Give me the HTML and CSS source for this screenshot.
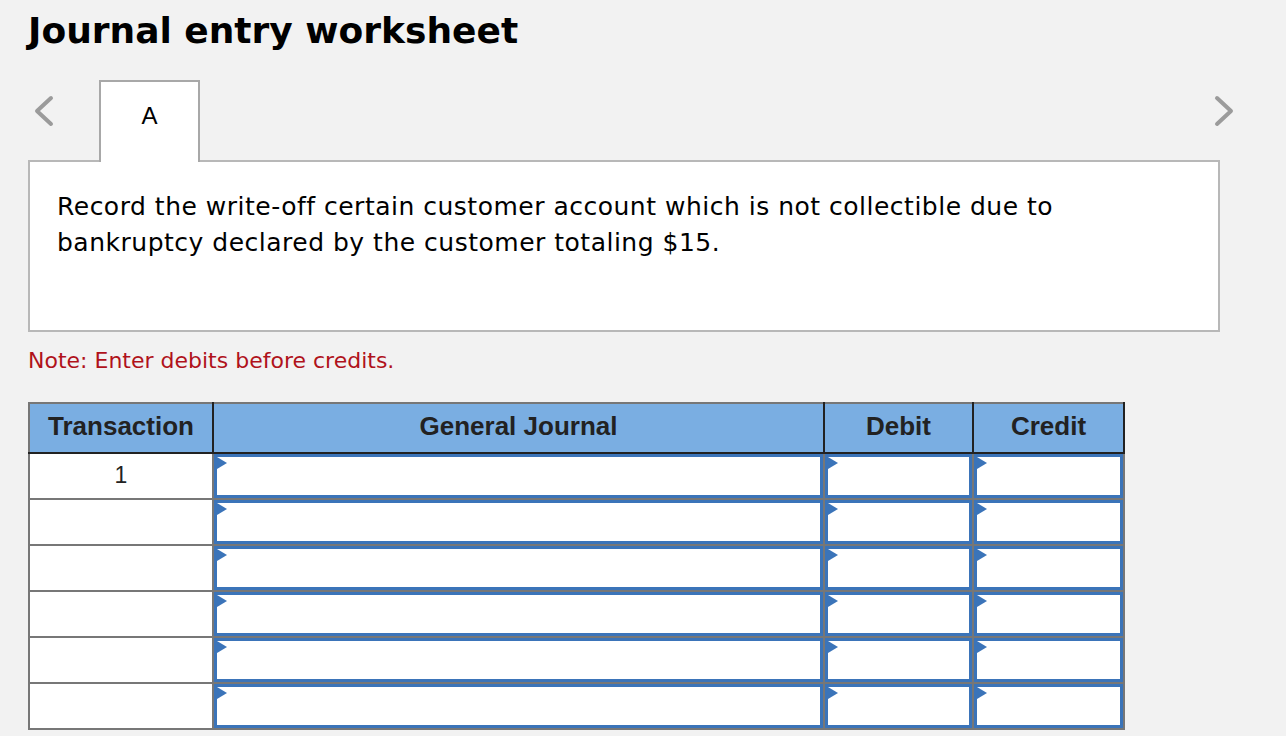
FILE: index.html
```html
<!DOCTYPE html>
<html lang="en">
<head>
<meta charset="utf-8">
<title>Journal entry worksheet</title>
<link rel="stylesheet" href="styles.css">
</head>
<body>
<div class="page">
  <h1 class="title">Journal entry worksheet</h1>

  <div class="nav">
    <button class="chev chev-left" aria-label="Previous">
      <svg width="20" height="32" viewBox="0 0 20 32"><polyline points="17,3 3,16 17,29" fill="none" stroke="#9b9b9b" stroke-width="4" stroke-linecap="round" stroke-linejoin="round"/></svg>
    </button>
    <div class="tab">A</div>
    <div class="spacer"></div>
    <button class="chev chev-right" aria-label="Next">
      <svg width="20" height="32" viewBox="0 0 20 32"><polyline points="3,3 17,16 3,29" fill="none" stroke="#9b9b9b" stroke-width="4" stroke-linecap="round" stroke-linejoin="round"/></svg>
    </button>
  </div>

  <div class="prompt">
    <p>Record the write-off certain customer account which is not collectible due to bankruptcy declared by the customer totaling $15.</p>
  </div>

  <p class="note">Note: Enter debits before credits.</p>

  <table class="journal">
    <colgroup>
      <col class="w-trans">
      <col class="w-gj">
      <col class="w-debit">
      <col class="w-credit">
    </colgroup>
    <thead>
      <tr><th>Transaction</th><th>General Journal</th><th>Debit</th><th>Credit</th></tr>
    </thead>
    <tbody>
      <tr><td class="trans">1</td><td class="cell"><div class="field"></div></td><td class="cell"><div class="field"></div></td><td class="cell"><div class="field"></div></td></tr>
      <tr><td class="trans"></td><td class="cell"><div class="field"></div></td><td class="cell"><div class="field"></div></td><td class="cell"><div class="field"></div></td></tr>
      <tr><td class="trans"></td><td class="cell"><div class="field"></div></td><td class="cell"><div class="field"></div></td><td class="cell"><div class="field"></div></td></tr>
      <tr><td class="trans"></td><td class="cell"><div class="field"></div></td><td class="cell"><div class="field"></div></td><td class="cell"><div class="field"></div></td></tr>
      <tr><td class="trans"></td><td class="cell"><div class="field"></div></td><td class="cell"><div class="field"></div></td><td class="cell"><div class="field"></div></td></tr>
      <tr><td class="trans"></td><td class="cell"><div class="field"></div></td><td class="cell"><div class="field"></div></td><td class="cell"><div class="field"></div></td></tr>
    </tbody>
  </table>
</div>
</body>
</html>
```

FILE: styles.css
```css
html, body {
  margin: 0;
  padding: 0;
  background: #f2f2f2;
}
body {
  font-family: "DejaVu Sans", Verdana, sans-serif;
  color: #000;
}
.page {
  padding: 10px 0 0 28px;
}
.title {
  margin: 0;
  font-size: 36px;
  line-height: 41px;
  font-weight: bold;
  color: #000;
}
.nav {
  display: flex;
  align-items: flex-start;
  width: 1212px;
  margin-top: 29px;
}
.chev {
  background: none;
  border: 0;
  padding: 0;
  margin: 0;
  display: block;
  line-height: 0;
  cursor: pointer;
}
.chev-left {
  margin: 15px 0 0 6px;
  width: 65px;
  text-align: left;
}
.chev-right {
  margin: 15px 6px 0 0;
}
.tab {
  position: relative;
  z-index: 1;
  box-sizing: border-box;
  width: 101px;
  height: 82px;
  margin-bottom: -2px;
  background: #fff;
  border: 2px solid #a8a8a8;
  border-bottom: 0;
  font-family: "Liberation Sans", Arial, sans-serif;
  font-size: 24px;
  line-height: 26px;
  text-align: center;
  padding-top: 21px;
  color: #000;
}
.spacer {
  flex: 1;
}
.prompt {
  box-sizing: border-box;
  width: 1192px;
  height: 172px;
  background: #fff;
  border: 2px solid #b8b8b8;
  padding: 27px 27px 0 27px;
}
.prompt p {
  margin: 0;
  font-size: 25px;
  letter-spacing: 0.5px;
  line-height: 36px;
  color: #000;
}
.note {
  margin: 16px 0 0 0;
  font-size: 22px;
  line-height: 26px;
  color: #b0121b;
}
.journal {
  margin-top: 28px;
  border-collapse: collapse;
  table-layout: fixed;
  width: 1095px;
  border: 2px solid #777;
  font-family: "Liberation Sans", Arial, sans-serif;
}
.w-trans { width: 184px; }
.w-gj { width: 611px; }
.w-debit { width: 149px; }
.w-credit { width: 151px; }
.journal th {
  height: 45px;
  padding: 0 0 3px 0;
  background: #7aaee2;
  color: #222;
  font-size: 26px;
  font-weight: bold;
  text-align: center;
  border-right: 2px solid #222;
  border-bottom: 2px solid #222;
  border-top: 2px solid #777;
}
.journal th:first-child {
  border-left: 2px solid #777;
}
.journal td {
  padding: 0;
  height: 44px;
  background: #fff;
  border: 2px solid #777;
}
.journal td.trans {
  text-align: center;
  vertical-align: top;
  padding-top: 8px;
  height: 36px;
  font-size: 23px;
  line-height: 26px;
  color: #222;
}
.field {
  position: relative;
  box-sizing: border-box;
  height: 44px;
  border: 3px solid #3b74b9;
  background: #fff;
}
.field::before {
  content: "";
  position: absolute;
  left: 0;
  top: 0;
  width: 0;
  height: 0;
  border-left: 10px solid #3b74b9;
  border-top: 6px solid transparent;
  border-bottom: 6px solid transparent;
}
```
